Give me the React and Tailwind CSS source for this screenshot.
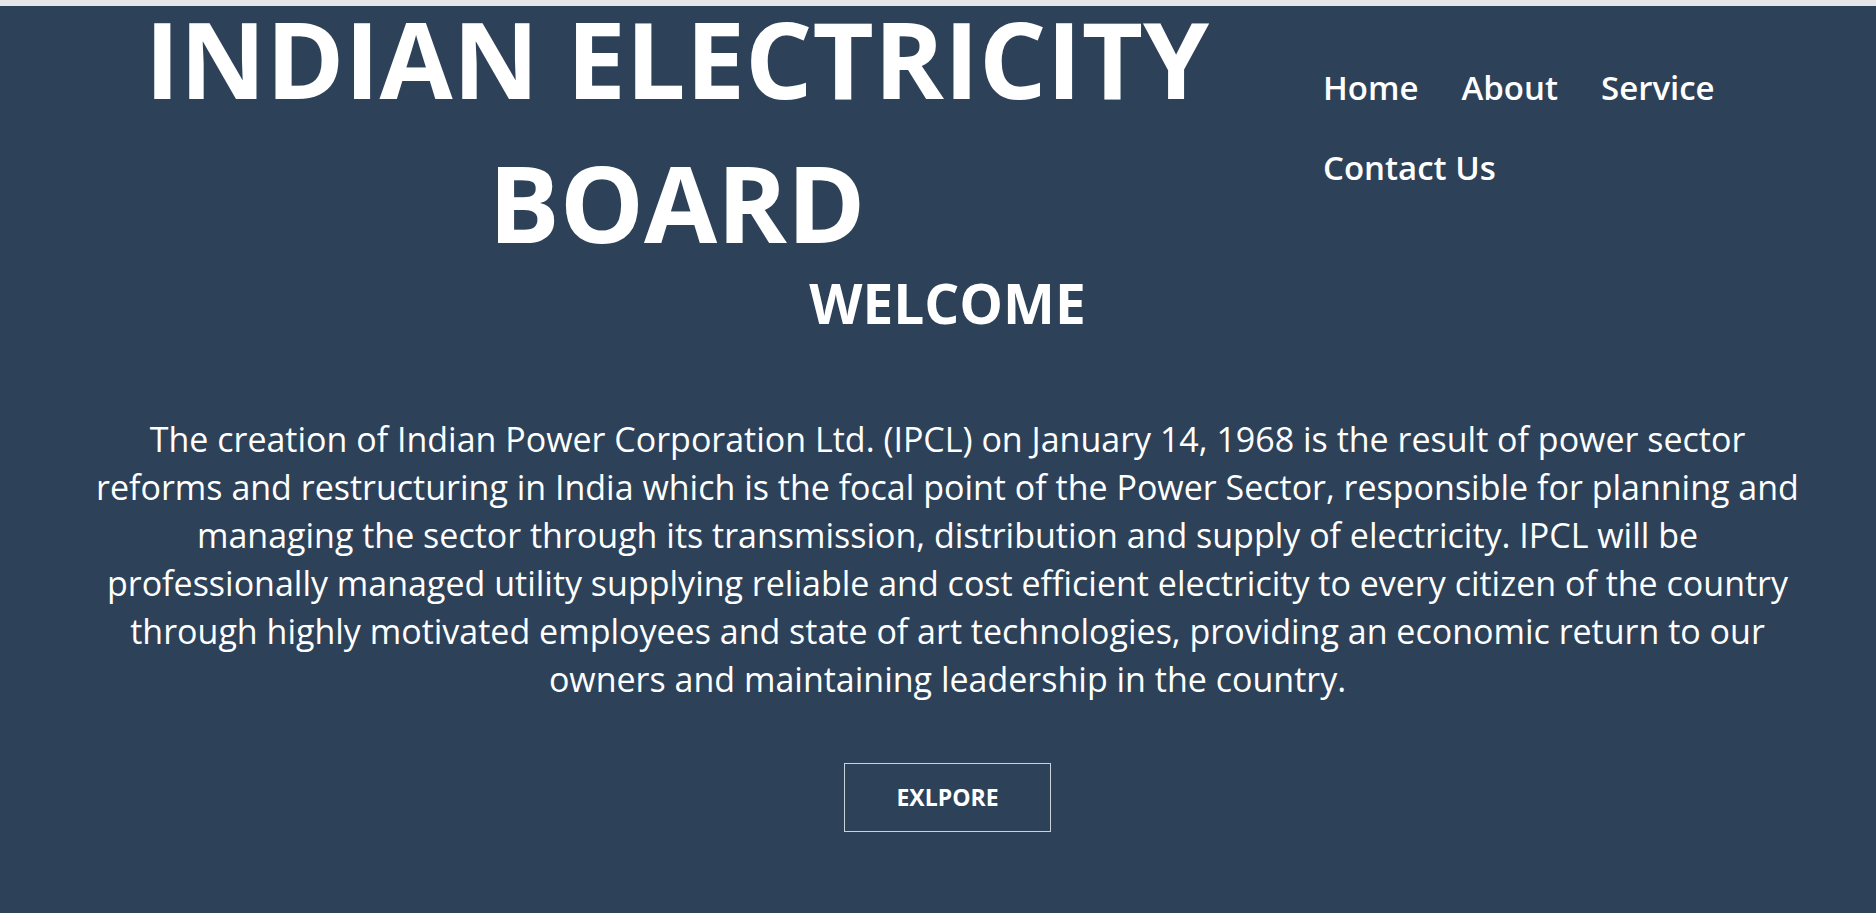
const navLinks = ["Home", "About", "Service", "Contact Us"];

const App = () => {
  return (
    <div className="min-h-screen bg-[#2d4259] text-white font-['Open_Sans',sans-serif]">
      {/* top strip */}
      <div className="h-[6px] bg-[#e6e6e6]"></div>

      <section className="pl-[19px]">
        {/* Header */}
        <header className="flex items-start">
          <h1 className="w-[1316px] -mt-[20px] text-center text-[106px] font-bold leading-[144px]">
            INDIAN ELECTRICITY BOARD
          </h1>

          <nav className="w-[480px] mt-[42px] -ml-[12px]">
            <ul className="flex flex-wrap gap-x-[43px] text-[33px] font-semibold leading-[80px]">
              {navLinks.map((link, index) => (
                <li key={index}>
                  <a href="#">{link}</a>
                </li>
              ))}
            </ul>
          </nav>
        </header>

        {/* Welcome */}
        <h2 className="text-center text-[55px] font-bold leading-[58px]">
          WELCOME
        </h2>

        <p className="mt-[83px] mx-auto max-w-[1840px] text-center text-[34px] leading-[48px]">
          The creation of Indian Power Corporation Ltd. (IPCL) on January 14,
          1968 is the result of power sector
          <br />
          reforms and restructuring in India which is the focal point of the
          Power Sector, responsible for planning and
          <br />
          managing the sector through its transmission, distribution and supply
          of electricity. IPCL will be
          <br />
          professionally managed utility supplying reliable and cost efficient
          electricity to every citizen of the country
          <br />
          through highly motivated employees and state of art technologies,
          providing an economic return to our
          <br />
          owners and maintaining leadership in the country.
        </p>

        <div className="mt-[60px] flex justify-center">
          <button className="w-[207px] h-[69px] border border-[#c9d1da] text-[23px] font-bold">
            EXLPORE
          </button>
        </div>
      </section>
    </div>
  );
};

export default App;
